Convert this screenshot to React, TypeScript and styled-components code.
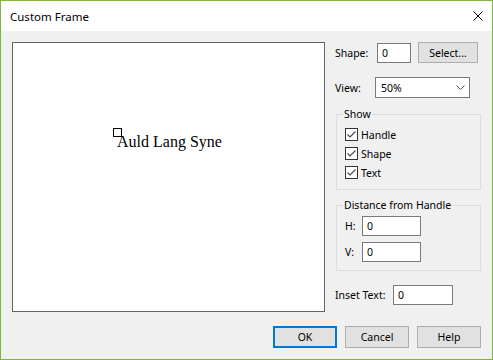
import React from 'react';
import styled, { createGlobalStyle } from 'styled-components';

const Global = createGlobalStyle`
  html, body { margin: 0; padding: 0; }
  body {
    width: 493px; height: 360px; overflow: hidden;
    font-family: "Noto Sans", "Open Sans", sans-serif;
    font-size: 10.5px; color: #000;
  }
  * { box-sizing: border-box; }
`;

const Window = styled.div`
  width: 493px; height: 360px;
  border: 1px solid #80b43c;
  display: flex; flex-direction: column;
  background: #f0f0f0;
`;

const TitleBar = styled.div`
  height: 30px; flex: none;
  background: #fff;
  display: flex; align-items: center;
  padding-left: 9px;
  font-size: 11.5px;
`;

const CloseIcon = styled.svg`
  margin-left: auto; margin-right: 9px;
  width: 10px; height: 10px;
`;

const Content = styled.div`
  flex: 1;
  padding: 11px 11px 0 11px;
  display: flex; flex-direction: column;
`;

const Main = styled.div`
  display: flex; align-items: flex-start; gap: 10px;
`;

const Preview = styled.div`
  position: relative;
  width: 314px; height: 270px;
  border: 1px solid #646464;
  background: #fff;
`;

const HandleMark = styled.div`
  position: absolute; left: 100px; top: 85px;
  width: 9px; height: 9px;
  border: 1px solid #000;
`;

const Caption = styled.div`
  position: absolute; left: 104px; top: 90px;
  font-family: "Liberation Serif", "Times New Roman", serif;
  font-size: 16px; line-height: 18px;
  white-space: nowrap;
`;

const Side = styled.div`
  width: 146px;
  display: flex; flex-direction: column;
`;

const Row = styled.div<{ $top?: number; $indent?: number }>`
  display: flex; align-items: center;
  margin-top: ${p => p.$top ?? 0}px;
  margin-left: ${p => p.$indent ?? 0}px;
`;

const Label = styled.span<{ $w: number }>`
  width: ${p => p.$w}px; flex: none;
  white-space: nowrap;
`;

const Field = styled.input<{ $w: number }>`
  width: ${p => p.$w}px; height: 20px;
  border: 1px solid #7a7a7a;
  background: #fff;
  padding: 0 0 0 4px; margin: 0;
  font: inherit; color: #000;
  outline: none;
`;

const Button = styled.button<{ $w: number; $default?: boolean }>`
  width: ${p => p.$w}px; height: ${p => (p.$default ? 22 : 22)}px;
  margin: 0; padding: 0;
  background: #e1e1e1;
  border: ${p => (p.$default ? '2px solid #0078d7' : '1px solid #adadad')};
  font: inherit; color: #000;
  display: flex; align-items: center; justify-content: center;
`;

const Combo = styled.div`
  width: 95px; height: 21px;
  border: 1px solid #7a7a7a;
  background: #fff;
  display: flex; align-items: center;
  padding: 0 4px 0 5px;
`;

const Chevron = styled.svg`
  margin-left: auto; margin-right: 0px;
  width: 9px; height: 5px;
`;

const Group = styled.fieldset<{ $bottom: number }>`
  margin: 0 0 0 1px;
  width: 145px; min-inline-size: 0;
  border: 1px solid #dcdcdc;
  padding: 4px 6px ${p => p.$bottom}px 6px;
`;

const Legend = styled.legend`
  padding: 0 1px;
  line-height: 14px;
`;

const CheckRow = styled.label`
  display: flex; align-items: center;
  height: 19px;
  margin-left: 2px;
`;

const Box = styled.span`
  width: 13px; height: 13px; flex: none;
  border: 1px solid #333;
  background: #fff;
  margin-right: 3px;
  display: flex; align-items: center; justify-content: center;
`;

const Footer = styled.div`
  margin-top: 14px;
  display: flex; justify-content: flex-end; gap: 8px;
`;

const Check = () => (
  <Box>
    <svg width="11" height="11" viewBox="0 0 11 11">
      <polyline points="1.5,5.5 4,8 9.5,2.5" fill="none" stroke="#4a4a4a" strokeWidth="1.2" />
    </svg>
  </Box>
);

export default function App() {
  return (
    <>
      <Global />
      <Window>
        <TitleBar>
          Custom Frame
          <CloseIcon viewBox="0 0 10 10">
            <path d="M0.5 0.5 L9.5 9.5 M9.5 0.5 L0.5 9.5" stroke="#000" strokeWidth="1" />
          </CloseIcon>
        </TitleBar>
        <Content>
          <Main>
            <Preview>
              <HandleMark />
              <Caption>Auld Lang Syne</Caption>
            </Preview>
            <Side>
              <Row>
                <Label $w={42}>Shape:</Label>
                <Field $w={34} defaultValue="0" readOnly />
                <Button $w={60} style={{ marginLeft: 7, height: 21 }}>Select...</Button>
              </Row>
              <Row $top={14}>
                <Label $w={40}>View:</Label>
                <Combo>
                  50%
                  <Chevron viewBox="0 0 9 5">
                    <polyline points="0.5,0.5 4.5,4.5 8.5,0.5" fill="none" stroke="#555" strokeWidth="1" />
                  </Chevron>
                </Combo>
              </Row>
              <Row $top={9}>
                <Group $bottom={7}>
                  <Legend>Show</Legend>
                  <CheckRow><Check />Handle</CheckRow>
                  <CheckRow><Check />Shape</CheckRow>
                  <CheckRow><Check />Text</CheckRow>
                </Group>
              </Row>
              <Row $top={8}>
                <Group $bottom={8}>
                  <Legend>Distance from Handle</Legend>
                  <Row $indent={2}>
                    <Label $w={17}>H:</Label>
                    <Field $w={59} defaultValue="0" readOnly />
                  </Row>
                  <Row $indent={2} $top={6}>
                    <Label $w={17}>V:</Label>
                    <Field $w={59} defaultValue="0" readOnly />
                  </Row>
                </Group>
              </Row>
              <Row $top={14}>
                <Label $w={58}>Inset Text:</Label>
                <Field $w={60} defaultValue="0" readOnly />
              </Row>
            </Side>
          </Main>
          <Footer>
            <Button $w={64} $default>OK</Button>
            <Button $w={64}>Cancel</Button>
            <Button $w={64}>Help</Button>
          </Footer>
        </Content>
      </Window>
    </>
  );
}
